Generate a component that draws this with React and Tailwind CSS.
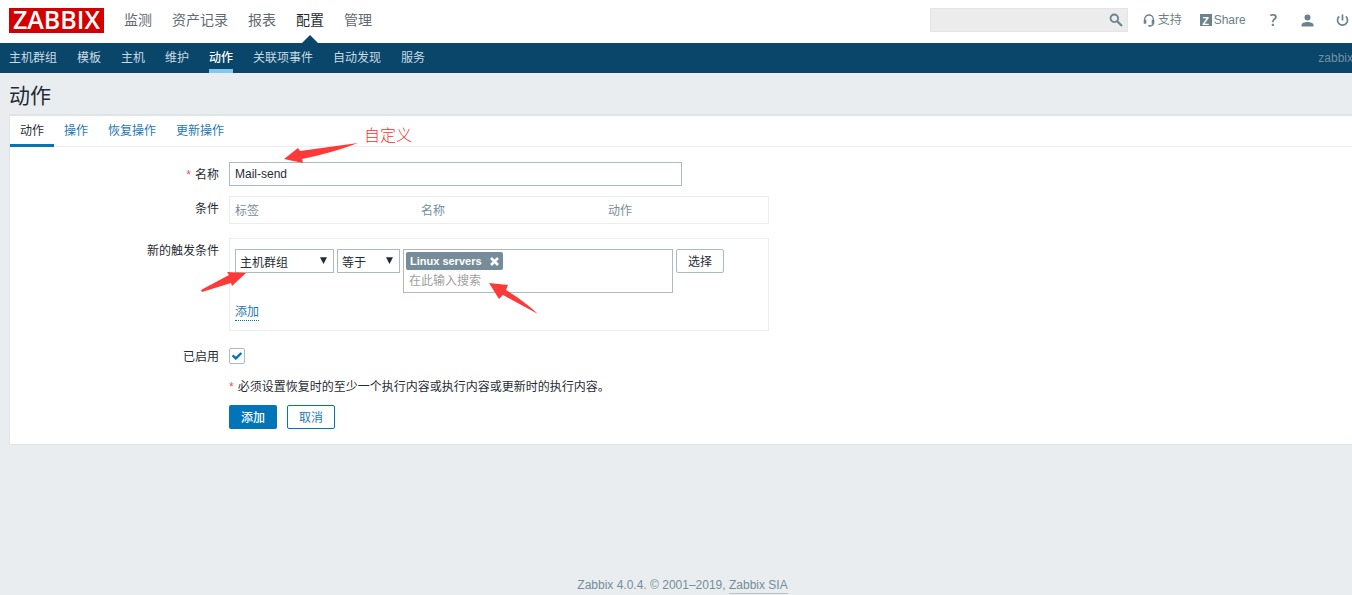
import React, { useState } from "react";

const mainMenu = ["监测", "资产记录", "报表", "配置", "管理"];
const subMenu = ["主机群组", "模板", "主机", "维护", "动作", "关联项事件", "自动发现", "服务"];
const tabs = ["动作", "操作", "恢复操作", "更新操作"];

// --- Icons ---
const IconSearch = () => (
  <svg width="14" height="14" viewBox="0 0 14 14" fill="none" stroke="#6b828f">
    <circle cx="5.3" cy="5.3" r="3.8" strokeWidth="1.8" />
    <path d="M8 8l5 5" strokeWidth="2.2" />
  </svg>
);

const IconSupport = () => (
  <svg width="12" height="13" viewBox="0 0 12 13" fill="none" stroke="#6b828f">
    <path d="M1.6 7V5.4C1.6 2.9 3.5 1 6 1s4.4 1.9 4.4 4.4V9c0 1.8-1.2 2.8-3.2 2.8" strokeWidth="1.3" />
    <path d="M2 5.8v4M10 5.8v4" strokeWidth="2.6" />
    <path d="M5.4 11.8h2.4" strokeWidth="1.8" />
  </svg>
);

const IconUser = () => (
  <svg width="13" height="13" viewBox="0 0 13 13" fill="#6b828f">
    <circle cx="6.5" cy="3.6" r="3" />
    <path d="M0.5 12.4v-1.2C0.5 9.2 3.4 8 6.5 8s6 1.2 6 3.2v1.2z" />
  </svg>
);

const IconPower = () => (
  <svg width="13" height="13" viewBox="0 0 13 13" fill="none" stroke="#6b828f" strokeWidth="1.7">
    <path d="M3.2 2.4a5 5 0 1 0 6.6 0M6.5 0.5v6" />
  </svg>
);

// --- Header ---
const Header = () => (
  <header className="flex h-[43px] items-start bg-white pl-[9px] pr-4">
    <a
      href="#home"
      className="mt-2 flex h-[25px] w-[95px] items-center justify-center bg-[#d40000] pb-[3px] font-['Open_Sans'] text-[25px] font-semibold leading-6 text-white"
    >
      ZABBIX
    </a>
    <nav className="ml-5 flex gap-5 text-sm leading-5">
      {mainMenu.map((item) => (
        <a
          key={item}
          href="#menu"
          className={`relative h-[43px] pt-[10px] ${item === "配置" ? "text-[#1f2c33]" : "text-[#5f6b72]"}`}
        >
          {item}
          {item === "配置" && (
            <svg className="absolute bottom-0 left-1/2 -translate-x-1/2" width="16" height="8" viewBox="0 0 16 8">
              <path d="M8 0l8 8H0z" fill="#0a466a" />
            </svg>
          )}
        </a>
      ))}
    </nav>

    <div className="ml-auto flex h-10 items-center text-[#6b7f8a]">
      <div className="relative">
        <input
          aria-label="search"
          className="block h-6 w-[198px] border border-[#e3e5e6] bg-[#ececec] pl-1 pr-6 outline-none"
        />
        <button aria-label="search button" className="absolute right-[5px] top-[5px]">
          <IconSearch />
        </button>
      </div>
      <a href="#support" className="ml-[15px] flex items-center gap-[3px]">
        <IconSupport />
        <span>支持</span>
      </a>
      <a href="#share" className="ml-[18px] flex items-center gap-[2px]">
        <span className="flex h-3 w-3 items-center justify-center bg-[#6b828f] pt-px text-[11px] font-bold leading-3 text-white">
          Z
        </span>
        <span>Share</span>
      </a>
      <a href="#help" className="ml-6 font-['Open_Sans'] text-base font-semibold">?</a>
      <a href="#profile" aria-label="profile" className="ml-6">
        <IconUser />
      </a>
      <a href="#logout" aria-label="logout" className="ml-[22px]">
        <IconPower />
      </a>
    </div>
  </header>
);

const SubNav = () => (
  <nav className="flex h-[30px] gap-5 bg-[#0a466a] pl-[9px] pr-3 leading-[30px] text-[#c9dbe6]">
    {subMenu.map((item) => (
      <a
        key={item}
        href="#sub"
        className={item === "动作" ? "border-b-4 border-[#7fc7f5] font-medium text-white" : ""}
      >
        {item}
      </a>
    ))}
    <span className="ml-auto text-[#7390a3]">zabbix</span>
  </nav>
);

// --- Form parts ---
const Row = ({ label, htmlFor, required, className = "", children }) => (
  <div className={`flex items-start gap-[10px] ${className}`}>
    <label htmlFor={htmlFor} className="h-6 w-[209px] shrink-0 pt-px text-right leading-6">
      {required && <span className="mr-1 text-[#e45959]">*</span>}
      {label}
    </label>
    {children}
  </div>
);

const Select = ({ id, label, options, className }) => (
  <div className={`relative ${className}`}>
    <select
      id={id}
      aria-label={label}
      className="block h-6 w-full appearance-none border border-[#acbbc2] bg-white pl-1 pr-5 pt-1 outline-none"
    >
      {options.map((o) => (
        <option key={o}>{o}</option>
      ))}
    </select>
    <svg className="pointer-events-none absolute right-[7px] top-2" width="7" height="7" viewBox="0 0 7 7">
      <path d="M0 0.3h7L3.5 7z" fill="#1f2c33" />
    </svg>
  </div>
);

const ActionForm = () => {
  const [name, setName] = useState("Mail-send");
  const [enabled, setEnabled] = useState(true);

  return (
    <form className="pb-[15px] pt-[15px]">
      <Row label="名称" htmlFor="name" required>
        <input
          id="name"
          value={name}
          onChange={(e) => setName(e.target.value)}
          className="h-6 w-[453px] border border-[#acbbc2] px-[5px] outline-none"
        />
      </Row>

      <Row label="条件" className="mt-[10px]">
        <div className="w-[540px] border border-[#ebeef0] px-[5px]">
          <table className="w-full table-fixed text-left text-[#768d99]">
            <thead>
              <tr className="h-[26px]">
                <th className="w-[186px] pt-px font-normal">标签</th>
                <th className="w-[187px] pt-px font-normal">名称</th>
                <th className="pt-px font-normal">动作</th>
              </tr>
            </thead>
          </table>
        </div>
      </Row>

      <Row label="新的触发条件" htmlFor="condition" className="mt-[14px]">
        <div className="w-[540px] border border-[#ebeef0] px-[5px] pb-[9px] pt-[10px]">
          <div className="flex items-start gap-[3px]">
            <Select id="condition" options={["主机群组", "模板", "主机"]} className="w-[99px]" />
            <Select id="operator" label="operator" options={["等于", "不等于"]} className="w-[63px]" />
            <div className="h-11 w-[270px] border border-[#acbbc2] p-[2px]">
              <span className="flex h-[18px] w-fit items-center gap-2 rounded-[2px] bg-[#768d99] px-1 text-[11px] font-bold text-white">
                Linux servers
                <button type="button" aria-label="remove">
                  <svg width="9" height="9" viewBox="0 0 9 9" stroke="#fff" strokeWidth="2.6">
                    <path d="M1 1l7 7M8 1L1 8" />
                  </svg>
                </button>
              </span>
              <input
                aria-label="host groups"
                placeholder="在此输入搜索"
                className="block h-5 w-full px-[3px] pt-[2px] outline-none placeholder:text-[#a0a0a0]"
              />
            </div>
            <button type="button" className="h-6 w-12 rounded-[2px] border border-[#acbbc2] pt-px">
              选择
            </button>
          </div>
          <a
            href="#add"
            className="mt-[11px] inline-block border-b border-dotted border-[#0275b8] leading-4 text-[#1f78b4]"
          >
            添加
          </a>
        </div>
      </Row>

      <Row label="已启用" htmlFor="enabled" className="mt-[13px]">
        <div className="relative mt-1 h-4 w-4">
          <input
            id="enabled"
            type="checkbox"
            checked={enabled}
            onChange={(e) => setEnabled(e.target.checked)}
            className="block h-4 w-4 appearance-none rounded-[2px] border border-[#acbbc2] bg-white"
          />
          {enabled && (
            <svg className="pointer-events-none absolute left-[3px] top-1" width="10" height="8" viewBox="0 0 10 8">
              <path d="M0.6 3.4L3.8 6.4L9.4 1" fill="none" stroke="#0275b8" strokeWidth="2.4" />
            </svg>
          )}
        </div>
      </Row>

      <div className="ml-[219px] mt-[7px] leading-6">
        <span className="mr-1 text-[#e45959]">*</span>
        必须设置恢复时的至少一个执行内容或执行内容或更新时的执行内容。
      </div>

      <div className="ml-[219px] mt-[6px] flex gap-[10px]">
        <button type="button" className="h-6 w-12 rounded-[2px] bg-[#0275b8] pt-px font-medium text-white">
          添加
        </button>
        <button type="button" className="h-6 w-12 rounded-[2px] border border-[#0275b8] pt-px text-[#1f78b4]">
          取消
        </button>
      </div>
    </form>
  );
};

// Red notes drawn over the form
const Notes = () => (
  <>
    <span className="pointer-events-none absolute left-[354px] top-2 text-base font-light leading-6 text-[#ff2d2d]">
      自定义
    </span>
    <svg
      className="pointer-events-none absolute left-[185px] top-[20px]"
      width="350"
      height="185"
      viewBox="195 136 350 185"
      fill="#ff3838"
    >
      <path d="M358 143L300 151L298 148L284 159L303 163L302 159Q332 153 358 143z" />
      <path d="M201 290L229 275L227 272L246 273L232 286L231 283L202 292z" />
      <path d="M489 283L508 285L506 290Q524 301 538 314L503 295L499 299z" />
    </svg>
  </>
);

export default function App() {
  return (
    <div className="overflow-hidden bg-[#e9edf0] font-['Liberation_Sans','Noto_Sans_CJK_SC',sans-serif] text-xs text-[#1f2c33]">
      <div className="flex min-h-screen w-[calc(100%+13px)] flex-col">
        <Header />
        <SubNav />

        <main className="pl-[9px]">
          <h1 className="pb-[6px] pt-[11px] text-[21px] leading-6">动作</h1>
          <div className="relative border-b border-l border-t-2 border-[#dfe4e7] bg-white">
            <div className="flex h-[31px] border-b border-[#ebeef0] leading-[30px]">
              {tabs.map((tab, i) => (
                <a
                  key={tab}
                  href="#tab"
                  className={`h-[31px] px-[10px] ${i === 0 ? "border-b-[3px] border-[#0275b8]" : "text-[#1f78b4]"}`}
                >
                  {tab}
                </a>
              ))}
            </div>
            <ActionForm />
            <Notes />
          </div>
        </main>

        <footer className="mt-auto pb-px text-center leading-4 text-[#768d99]">
          Zabbix 4.0.4. © 2001–2019,{" "}
          <a href="#sia" className="inline-block border-b border-[#b9c4ca]">
            Zabbix SIA
          </a>
        </footer>
      </div>
    </div>
  );
}
